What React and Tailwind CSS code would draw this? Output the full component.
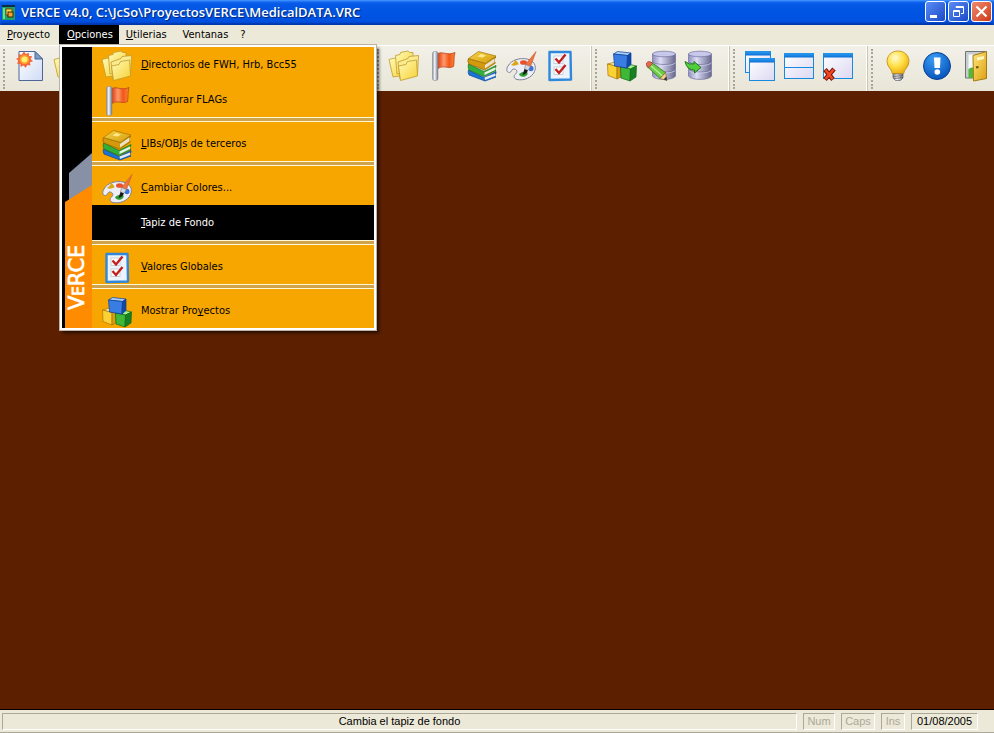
import React from "react";

const Gradients = () => (
  <svg className="absolute size-0" aria-hidden="true">
    <defs>
      <linearGradient id="paper" x1="0" y1="0" x2="1" y2="1">
        <stop offset="0" stopColor="#ffffff" />
        <stop offset="1" stopColor="#cfdcf6" />
      </linearGradient>
      <linearGradient id="folder" x1="0" y1="0" x2="1" y2="1">
        <stop offset="0" stopColor="#fffab8" />
        <stop offset="1" stopColor="#f6d236" />
      </linearGradient>
      <linearGradient id="pole" x1="0" y1="0" x2="1" y2="0">
        <stop offset="0" stopColor="#8a8f98" />
        <stop offset="0.4" stopColor="#f4f6fa" />
        <stop offset="1" stopColor="#6c717c" />
      </linearGradient>
      <linearGradient id="flag" x1="0" y1="0" x2="1" y2="0">
        <stop offset="0" stopColor="#e23c10" />
        <stop offset="0.35" stopColor="#ff9a6a" />
        <stop offset="0.65" stopColor="#f0561c" />
        <stop offset="1" stopColor="#ff8a2c" />
      </linearGradient>
      <linearGradient id="drum" x1="0" y1="0" x2="1" y2="0">
        <stop offset="0" stopColor="#8f8fbd" />
        <stop offset="0.35" stopColor="#dcdcf6" />
        <stop offset="1" stopColor="#66668c" />
      </linearGradient>
      <linearGradient id="pane" x1="0" y1="0" x2="1" y2="1">
        <stop offset="0" stopColor="#ffffff" />
        <stop offset="1" stopColor="#dcd8f2" />
      </linearGradient>
      <linearGradient id="blueBar" x1="0" y1="0" x2="0" y2="1">
        <stop offset="0" stopColor="#2f9bf0" />
        <stop offset="1" stopColor="#0b6fd6" />
      </linearGradient>
      <radialGradient id="bulb" cx="0.38" cy="0.3" r="0.75">
        <stop offset="0" stopColor="#fffbd0" />
        <stop offset="0.5" stopColor="#ffdf45" />
        <stop offset="1" stopColor="#e8a80c" />
      </radialGradient>
      <radialGradient id="info" cx="0.4" cy="0.25" r="0.8">
        <stop offset="0" stopColor="#3a9df5" />
        <stop offset="1" stopColor="#0450b8" />
      </radialGradient>
      <linearGradient id="door" x1="0" y1="0" x2="1" y2="1">
        <stop offset="0" stopColor="#ffe77c" />
        <stop offset="1" stopColor="#dd9f10" />
      </linearGradient>
      <linearGradient id="cover" x1="0" y1="0" x2="1" y2="1">
        <stop offset="0" stopColor="#f7d548" />
        <stop offset="1" stopColor="#d39a0c" />
      </linearGradient>
    </defs>
  </svg>
);

const Icon = ({ children }) => (
  <svg viewBox="0 0 32 32" className="size-8 shrink-0" aria-hidden="true">
    {children}
  </svg>
);

const NewIcon = () => (
  <Icon>
    <path d="M5 1.5H21L28.5 9V30.5H5Z" fill="url(#paper)" stroke="#4d6898" />
    <path d="M21 1.5V9H28.5Z" fill="#7f9cc6" stroke="#4d6898" />
    <path
      d="M10 1.5l1.8 2.6 3-1.4.2 3.2 3.2.3-1.5 2.8 2.3 2.2-3 1.1.5 3.2-3.1-.6-1.7 2.8-2.3-2.3-2.7 1.7-.4-3.2-3.3-.2 1.4-2.9L2 8.7l3-1.2-.6-3.2 3.2.5Z"
      fill="#f4683a"
    />
    <circle cx="10.5" cy="9.5" r="4.8" fill="#ff9c2e" />
    <circle cx="10.5" cy="9.5" r="3" fill="#fff36b" />
  </Icon>
);

const FolderIcon = () => (
  <Icon>
    <g stroke="#c09a28" strokeWidth="0.8" strokeLinejoin="round">
      <path d="M1 9.5L6.500 8L8 9.500L19 8L18 25L5 27Z" fill="url(#folder)" />
      <path d="M7.5 5.5L12 4.5L12.5 2.5L20 1L21.5 2.5L25 2.5L25 20L9 24Z" fill="url(#folder)" />
      <path d="M10 12L20 8.5L21 6.5L30.5 5.5L29.5 25L12 29Z" fill="#faea90" />
      <path d="M10.5 16L18 14.5L19.5 11.5L28.500 10L29.5 26L12.5 30.5Z" fill="url(#folder)" />
    </g>
  </Icon>
);

const FlagIcon = () => (
  <Icon>
    <path
      d="M11 3.5C16 1 20 6 28 2.5C26.5 7 27.5 12 26.5 16.5C21 19.5 17 14.5 11 18.5Z"
      fill="url(#flag)"
      stroke="#b8441c"
      strokeWidth="0.8"
    />
    <rect x="5.5" y="1.5" width="5.5" height="29" rx="2" fill="url(#pole)" stroke="#8a8e98" strokeWidth="0.6" />
  </Icon>
);

const BooksIcon = () => (
  <Icon>
    <g strokeLinejoin="round" strokeWidth="0.7">
      <path d="M2.5 20L18 27.5L30 21.5V23.5L29 24V26.5L30 27L19 31L3 25Q1.5 22 2.5 20Z" fill="#1a74d6" stroke="#0c4494" />
      <path d="M18.5 27.5L29 23.5V26L19 30Z" fill="#e4eaf4" />
      <path d="M2.5 14L18 21.5L30 15.5V17L29 17.5V20L30 20.5L18 26.5L3 20Q1.5 17 2.5 14Z" fill="#34b03a" stroke="#14721f" />
      <path d="M18.5 22.5L29 17.5V20L18.5 25Z" fill="#eef2ea" />
      <path d="M2.5 8.5L19.5 13.5L29.5 6.5V8L28.5 8.5V12L29.5 13L18.5 20L3 14Q1 11 2.5 8.5Z" fill="#d39a0c" stroke="#8c6008" />
      <path d="M2.5 8.5L12.5 1.5L30 6L19.5 13.5Z" fill="url(#cover)" stroke="#a87408" />
      <path d="M19 15L28.5 8.5V12L19 18.5Z" fill="#e9e4d0" />
      <path d="M11.5 6.5L15 4L20 5.500L16.5 7.500Z" fill="#ffe98a" />
    </g>
  </Icon>
);

const PaletteIcon = () => (
  <Icon>
    <path
      d="M3 16C6 10 15 7.5 22 9C29 10.5 32 16 29.5 21.5C27 27.5 19 31 12 29.5C8.5 28.5 8.5 25.5 10.5 24C13 22 12 19 8.5 19C6.5 19 7 22 4.5 22.5C1.5 22.5 1 19 3 16Z"
      fill="#eeeff6"
      stroke="#7d8296"
    />
    <path d="M6 15Q10 12 10 10Q13.5 12 13.5 14.5Q9 16.500 6 15Z" fill="#dba714" />
    <ellipse cx="18.5" cy="12.5" rx="3.500" ry="2.300" fill="#e8512c" />
    <ellipse cx="26" cy="18.5" rx="2.500" ry="2.800" fill="#3673dc" />
    <path d="M14 24Q17 21 21.5 21.5Q24.5 24 20 26.5Q15 27.5 14 24Z" fill="#2f9c34" />
    <path d="M31 1.500L25.500 16.500L20.500 14.500Z" fill="#f07440" stroke="#c8582c" strokeWidth="0.6" />
    <path d="M20.500 14.500L25.500 16.500L23 20.5L19.5 19Z" fill="#d6d8dd" stroke="#666b76" strokeWidth="0.5" />
    <path d="M19.5 19L23 20.5Q21.5 24 17.5 25Z" fill="#17191d" />
  </Icon>
);

const ChecklistIcon = () => (
  <Icon>
    <path d="M5.5 2H26.500L27 29.500L5.500 30Z" fill="#edf3fb" stroke="#3088dc" strokeWidth="2.400" strokeLinejoin="round" />
    <rect x="10" y="6" width="9" height="7.5" fill="#fff" stroke="#bcc5d3" strokeWidth="0.8" />
    <rect x="10" y="17" width="9" height="7.5" fill="#fff" stroke="#bcc5d3" strokeWidth="0.8" />
    <g fill="none" stroke="#c1201c" strokeWidth="2.400">
      <path d="M11.500 8.500L15 12.500L21.500 4.500" />
      <path d="M11.500 19L15 23L21.500 15" />
    </g>
  </Icon>
);

const CubesIcon = () => (
  <Icon>
    <g strokeLinejoin="round" strokeWidth="0.7">
      <g stroke="#a87604">
        <path d="M1.5 14L7.5 12.5L15 14L11 16.5Z" fill="#fff2a0" />
        <path d="M1.5 14L11 16.5V29L2 25.5Z" fill="#fbd235" />
        <path d="M11 16.5L15 14V27L11 29Z" fill="#d99c10" />
      </g>
      <g stroke="#136a1a">
        <path d="M14.5 17L22 14L30.5 16L24.5 19Z" fill="#a0ee8c" />
        <path d="M14.5 17L24.5 19L24 31L15 28Z" fill="#3fb838" />
        <path d="M24.5 19L30.5 16L30 27L24 31Z" fill="#168022" />
      </g>
      <g stroke="#0c3f96">
        <path d="M7.5 4L11.5 1.5L25 3L21.5 5.5Z" fill="#a8d0fa" />
        <path d="M7.5 4L21.5 5.5L21 18L8.5 16Z" fill="#397ce2" />
        <path d="M21.5 5.5L25 3V14.5L21 18Z" fill="#1148a8" />
      </g>
    </g>
  </Icon>
);

const Drum = ({ x }) => (
  <g transform={`translate(${x} 0)`} stroke="#70709c" strokeWidth="0.7">
    <path d="M0.5 4V26C2 30.5 22 30.5 23.5 26V4Z" fill="url(#drum)" />
    <ellipse cx="12" cy="4" rx="11.5" ry="2.8" fill="#c8c8ea" />
    <path d="M0.5 11.5C2 15.5 22 15.5 23.5 11.5M0.5 19C2 23 22 23 23.5 19" fill="none" />
    <path d="M0.5 12.5C2 16.5 22 16.5 23.5 12.5M0.5 20C2 24 22 24 23.5 20" fill="none" stroke="#d4d4f0" />
  </g>
);

const DatabaseEditIcon = () => (
  <Icon>
    <Drum x={7} />
    <path d="M6 12L20.500 22.500L15 28.5L2 16.5Z" fill="#6cc948" stroke="#347a22" strokeWidth="0.8" />
    <path d="M4.5 14.5L17.5 26" stroke="#b4f08c" strokeWidth="1.5" />
    <path d="M6 12Q3 10.500 1.500 13Q1 15.5 2 16.5L4 17.500L7.500 13.500Z" fill="#e46850" stroke="#962c20" strokeWidth="0.6" />
    <path d="M20.500 22.500L22 30.5L15 28.5Z" fill="#f4cf92" stroke="#84642e" strokeWidth="0.7" />
    <path d="M21.300 26.500L22 30.5L18.500 29.500Z" fill="#333" />
  </Icon>
);

const DatabaseArrowIcon = () => (
  <Icon>
    <Drum x={4} />
    <path d="M1 11.5Q5 15 10 14V11.5L17 17.5L10.5 23V20Q3 20.5 1 11.5Z" fill="#4fce3a" stroke="#1d7a18" strokeLinejoin="round" />
  </Icon>
);

const Pane = ({ x, y, w, h }) => (
  <g>
    <rect x={x} y={y} width={w} height={h} fill="url(#pane)" stroke="#188be0" />
    <rect x={x} y={y} width={w} height="4" fill="url(#blueBar)" />
  </g>
);

const CascadeIcon = () => (
  <Icon>
    <Pane x={1.5} y={1.5} w={25} h={21} />
    <Pane x={5.5} y={8.5} w={25} h={22} />
  </Icon>
);

const TileIcon = () => (
  <Icon>
    <Pane x={1.5} y={3.5} w={29} h={25} />
    <path d="M1 17.5H31" stroke="#188be0" />
  </Icon>
);

const CloseWindowIcon = () => (
  <Icon>
    <Pane x={1.5} y={3.5} w={29} h={25} />
    <path d="M3 19.5L11 29.500M12 19L3 29.500" stroke="#7e1406" strokeWidth="4.5" />
    <path d="M3.5 20L10.500 29M11.5 19.5L3.5 29" stroke="#f04a24" strokeWidth="2.6" />
  </Icon>
);

const BulbIcon = () => (
  <Icon>
    <path
      d="M16 1C9.5 1 5 5.5 5 11.5C5 17 10 19 10.5 24H21.5C22 19 27 17 27 11.5C27 5.5 22.5 1 16 1Z"
      fill="url(#bulb)"
      stroke="#bd8a10"
      strokeWidth="0.8"
    />
    <path d="M11 24H21V28L18.5 30.5H13.5L11 28Z" fill="url(#pole)" stroke="#62666e" strokeWidth="0.7" />
    <path d="M11 26.5L21 25.5M12 28.5L21 27.5" stroke="#555" strokeWidth="0.8" />
  </Icon>
);

const InfoIcon = () => (
  <Icon>
    <circle cx="16" cy="16" r="13.5" fill="url(#info)" stroke="#07418f" />
    <path d="M13 7.5H19.5L19 18H13.5Z" fill="#fff" />
    <circle cx="16.3" cy="22" r="2.8" fill="#fff" />
  </Icon>
);

const DoorIcon = () => (
  <Icon>
    <path d="M5.5 1.5H26.5V28H5.5Z" fill="#c9ccd0" stroke="#6f7378" />
    <path d="M8.5 4.5H14V19H8.5Z" fill="#f4fbff" />
    <path d="M8.5 19Q11 16.5 14 18V28H8.5Z" fill="#53b83a" />
    <path d="M13 5.5L26.5 1.5V28.5L13.5 31Z" fill="url(#door)" stroke="#a67c10" strokeLinejoin="round" />
    <path d="M17 7.5L24 6V9L17 10.5Z" fill="#fff6c8" />
    <path d="M16 17.5L18.5 17" stroke="#6b4f08" strokeWidth="2" />
  </Icon>
);

const toolGroups = [
  {
    width: "w-[374px]",
    tools: [
      ["Nuevo", NewIcon],
      ["Abrir", FolderIcon],
    ],
  },
  {
    width: "w-[218px]",
    tools: [
      ["Directorios", FolderIcon],
      ["FLAGs", FlagIcon],
      ["LIBs/OBJs", BooksIcon],
      ["Colores", PaletteIcon],
      ["Valores Globales", ChecklistIcon],
    ],
  },
  {
    width: "w-[138px]",
    tools: [
      ["Mostrar Proyectos", CubesIcon],
      ["Editar datos", DatabaseEditIcon],
      ["Importar datos", DatabaseArrowIcon],
    ],
  },
  {
    width: "w-[138px]",
    tools: [
      ["Cascada", CascadeIcon],
      ["Mosaico", TileIcon],
      ["Cerrar ventana", CloseWindowIcon],
    ],
  },
  {
    width: "grow",
    tools: [
      ["Sugerencias", BulbIcon],
      ["Acerca de", InfoIcon],
      ["Salir", DoorIcon],
    ],
  },
];

// text before the access key, the key itself, text after it
const menuItems = [
  { label: ["", "D", "irectorios de FWH, Hrb, Bcc55"], icon: FolderIcon },
  { label: ["Configurar FLAGs", "", ""], icon: FlagIcon },
  null,
  { label: ["", "L", "IBs/OBJs de terceros"], icon: BooksIcon },
  null,
  { label: ["", "C", "ambiar Colores..."], icon: PaletteIcon },
  { label: ["", "T", "apiz de Fondo"], active: true },
  null,
  { label: ["", "V", "alores Globales"], icon: ChecklistIcon },
  null,
  { label: ["Mostrar Pro", "y", "ectos"], icon: CubesIcon },
];

const Label = ({ parts }) => (
  <span>
    {parts[0]}
    <u className="[text-decoration-skip-ink:none]">{parts[1]}</u>
    {parts[2]}
  </span>
);

const TitleBar = () => (
  <header className="flex h-[25px] shrink-0 items-center bg-linear-to-b from-[#0a5ce8] via-[#0054e3] to-[#0050e0] px-[2px] shadow-[inset_0_1px_0_#3a8cff,inset_0_2px_2px_#2b7df5,inset_0_-2px_2px_#0036a8]">
    <svg viewBox="0 0 13 15" className="mr-[6px] h-[15px] w-[13px]" aria-hidden="true">
      <rect width="13" height="15" fill="#1fa06a" />
      <path d="M0 0H13V2H0Z" fill="#0d2f3c" />
      <path d="M1 3H3V14H1Z" fill="#5fe0a0" />
      <rect x="4" y="4" width="6" height="6" fill="#f4e04a" stroke="#7c4a10" />
      <rect x="6" y="7" width="5" height="5" fill="#f8a030" stroke="#38280c" />
    </svg>
    <h1 className="grow truncate font-['Open_Sans','Noto_Sans',sans-serif] text-[13px] font-semibold text-white [text-shadow:1px_1px_1px_#00247a]">
      VERCE v4.0, C:\JcSo\ProyectosVERCE\MedicalDATA.VRC
    </h1>
    <div className="flex gap-[2px] pb-[2px]">
      <button aria-label="Minimizar" className="size-[21px] rounded-[3px] border border-white bg-linear-to-br from-[#5b8cf4] to-[#1c48c8]">
        <svg viewBox="0 0 19 19" className="size-full">
          <path d="M4 13H11V16H4Z" fill="#fff" />
        </svg>
      </button>
      <button aria-label="Restaurar" className="size-[21px] rounded-[3px] border border-white bg-linear-to-br from-[#5b8cf4] to-[#1c48c8]">
        <svg viewBox="0 0 19 19" className="size-full" fill="none" stroke="#fff">
          <path d="M7 5.5V4.5H14.5V11.5H12M7 5.5H14" />
          <path d="M4.5 8.5H10.5V14.5H4.5ZM4.5 9.5H10.5" />
        </svg>
      </button>
      <button aria-label="Cerrar" className="size-[21px] rounded-[3px] border border-white bg-linear-to-br from-[#ee8a6c] to-[#cc3510]">
        <svg viewBox="0 0 19 19" className="size-full">
          <path d="M4.5 4.5L14.5 14.5M14.5 4.5L4.5 14.5" stroke="#fff" strokeWidth="2.2" />
        </svg>
      </button>
    </div>
  </header>
);

const OptionsMenu = () => (
  <div className="absolute left-[1px] top-full z-10 flex w-[316px] border-2 border-white bg-[#f7a600] outline outline-[#b9b3a2] shadow-[3px_3px_3px_rgba(0,0,0,0.6)]">
    {/* side banner */}
    <svg viewBox="0 0 30 281" className="w-[30px] shrink-0 bg-black" aria-hidden="true">
      <path d="M7 126L30 106V139L7 154Z" fill="#8790a5" />
      <path d="M3 155L30 138V281H3Z" fill="#ff8c00" />
      <text
        transform="translate(22 263) rotate(-90)"
        fill="#fff"
        stroke="#fff"
        strokeWidth="0.7"
        className="font-['DejaVu_Sans',sans-serif] text-[21px] [font-variant:small-caps]"
      >
        VeRCE
      </text>
    </svg>
    <ul className="grow text-black">
      {menuItems.map((item, i) =>
        item === null ? (
          <li key={i} className="h-[9px]">
            <div className="h-[5px] border-y border-[#fff8d8] bg-[#cfa44c]"></div>
          </li>
        ) : (
          <li key={i}>
            <button
              className={
                item.active
                  ? "flex h-[35px] w-full items-center gap-2 bg-black pl-[9px] pt-[2px] text-left text-white"
                  : "flex h-[35px] w-full items-center gap-2 pl-[9px] pt-[2px] text-left"
              }
            >
              {item.icon ? <item.icon /> : <span className="size-8"></span>}
              <Label parts={item.label} />
            </button>
          </li>
        )
      )}
    </ul>
  </div>
);

const MenuBar = () => (
  <nav className="flex h-[20px] shrink-0 bg-[#ece9d8] text-black">
    <button className="pl-[7px] pr-[9px]">
      <Label parts={["", "P", "royecto"]} />
    </button>
    <div className="relative">
      <button className="h-full bg-black pl-2 pr-[6px] text-white">
        <Label parts={["", "O", "pciones"]} />
      </button>
      <OptionsMenu />
    </div>
    <button className="pl-[7px] pr-2">
      <Label parts={["", "U", "tilerias"]} />
    </button>
    <button className="px-2">Ventanas</button>
    <button className="px-1">?</button>
  </nav>
);

const ToolBar = () => (
  <div className="flex h-[46px] shrink-0 border-t border-white bg-linear-to-b from-[#f2f0e8] to-[#e9e6d8]">
    {toolGroups.map((group, i) => (
      <div
        key={i}
        className={`${group.width} flex shrink-0 items-center border-r border-[#cbc7b5] pl-[3px] shadow-[inset_-1px_0_0_#fff]`}
      >
        <div className="mr-[5px] h-10 border-l-2 border-dotted border-[#a9a594]"></div>
        {group.tools.map(([name, Glyph]) => (
          <button key={name} aria-label={name} className="flex w-[39px] justify-center pb-[5px]">
            <Glyph />
          </button>
        ))}
      </div>
    ))}
  </div>
);

const Panel = ({ className, children }) => (
  <div className={`${className} h-[17px] border border-[#aca899] border-b-white border-r-white leading-[15px]`}>
    {children}
  </div>
);

const StatusBar = () => (
  <footer className="flex h-[24px] shrink-0 items-center gap-[6px] border-b border-t border-b-[#aca899] border-t-black bg-[#ece9d8] pl-[2px] pr-4 font-['Liberation_Sans',sans-serif] text-[11px] text-black">
    <Panel className="grow text-center">Cambia el tapiz de fondo</Panel>
    <Panel className="w-[32px] text-center text-[#aca899]">Num</Panel>
    <Panel className="w-[34px] text-center text-[#aca899]">Caps</Panel>
    <Panel className="w-[24px] text-center text-[#aca899]">Ins</Panel>
    <Panel className="w-[67px] text-center">01/08/2005</Panel>
  </footer>
);

const App = () => {
  return (
    <div className="flex h-screen flex-col overflow-hidden bg-[#5c1f00] font-['DejaVu_Sans_Condensed','Noto_Sans',sans-serif] text-[11px]">
      <Gradients />
      <TitleBar />
      <MenuBar />
      <ToolBar />
      <main className="grow"></main>
      <StatusBar />
    </div>
  );
};

export default App;
